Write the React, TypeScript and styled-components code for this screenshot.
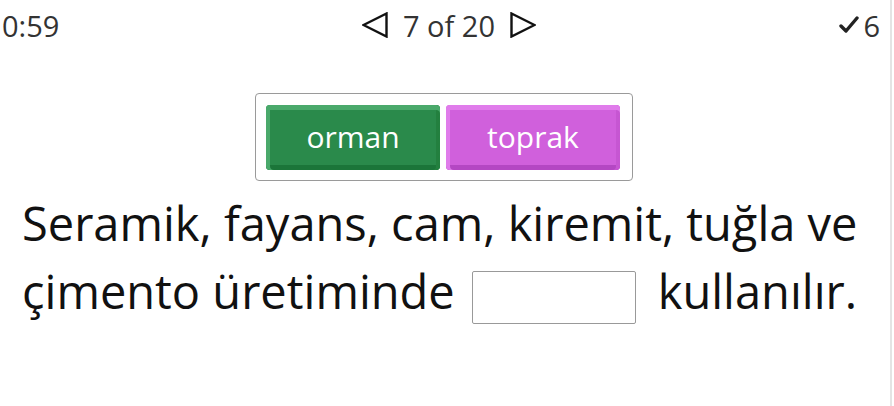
import React from "react";
import styled, { createGlobalStyle } from "styled-components";

const Global = createGlobalStyle`
  html, body { margin: 0; padding: 0; background: #fff; }
  body { font-family: "Open Sans", "Noto Sans", sans-serif; }
`;

const Page = styled.div`
  width: 890px;
  height: 406px;
  border-right: 2px solid #e4e4e4;
  box-sizing: content-box;
  display: flex;
  flex-direction: column;
  align-items: stretch;
  overflow: hidden;
`;

const Header = styled.div`
  height: 50px;
  display: flex;
  align-items: center;
  justify-content: space-between;
  padding: 0 10px 0 2px;
  color: #333;
  font-size: 29px;
  font-family: "Open Sans", sans-serif;
`;

const Slot = styled.div<{ $align: string; $gap: number; $indent?: number }>`
  flex: 1;
  display: flex;
  align-items: center;
  justify-content: ${(p) => p.$align};
  gap: ${(p) => p.$gap}px;
  padding-left: ${(p) => p.$indent ?? 0}px;
`;

const Tri = styled.svg`
  width: 26px;
  height: 26px;
  display: block;
`;

const ChoicesRow = styled.div`
  display: flex;
  justify-content: center;
  margin-top: 43px;
  padding-right: 2px;
`;

const Choices = styled.div`
  display: flex;
  gap: 6px;
  padding: 11px 12px 10px 10px;
  border: 1px solid #9a9a9a;
  border-radius: 4px;
`;

const Choice = styled.div<{ $base: string; $top: string; $bottom: string; $side: string }>`
  width: 174px;
  height: 65px;
  border-radius: 4px;
  background: ${(p) => p.$base};
  box-shadow: inset 0 5px 0 ${(p) => p.$top}, inset 4px 0 0 ${(p) => p.$top},
    inset -4px 0 0 ${(p) => p.$side}, inset 0 -5px 0 ${(p) => p.$bottom};
  color: #fff;
  font-size: 30px;
  font-weight: 500;
  display: flex;
  align-items: center;
  justify-content: center;
  padding-bottom: 3px;
  box-sizing: border-box;
`;

const Sentence = styled.div`
  margin-top: 8px;
  padding-left: 22px;
  font-family: "Open Sans", sans-serif;
  font-size: 47px;
  line-height: 68px;
  color: #111;
`;

const Blank = styled.span`
  display: inline-block;
  width: 164px;
  height: 53px;
  border: 1px solid #999;
  border-radius: 2px;
  box-sizing: border-box;
  vertical-align: middle;
  margin: 2px 22px 0 17px;
`;

export default function App() {
  return (
    <>
      <Global />
      <Page>
        <Header>
          <Slot $align="flex-start" $gap={0}>0:59</Slot>
          <Slot $align="center" $gap={15} $indent={16}>
            <Tri viewBox="0 0 26 26">
              <path d="M24.5 1.5 L1.5 13 L24.5 24.5 Z" fill="none" stroke="#111" strokeWidth="2.4" strokeLinejoin="miter" />
            </Tri>
            <span>7 of 20</span>
            <Tri viewBox="0 0 26 26">
              <path d="M1.5 1.5 L24.5 13 L1.5 24.5 Z" fill="none" stroke="#111" strokeWidth="2.4" strokeLinejoin="miter" />
            </Tri>
          </Slot>
          <Slot $align="flex-end" $gap={4}>
            <svg width="20" height="20" viewBox="0 0 20 20">
              <path d="M2 11 L7 16 L18 3" fill="none" stroke="#222" strokeWidth="3.4" strokeLinecap="round" strokeLinejoin="round" />
            </svg>
            <span>6</span>
          </Slot>
        </Header>
        <ChoicesRow>
          <Choices>
            <Choice $base="#2a8a4b" $top="#4aa96b" $side="#23803f" $bottom="#1b7539">orman</Choice>
            <Choice $base="#d060dc" $top="#e07ceb" $side="#c656d2" $bottom="#b447c3">toprak</Choice>
          </Choices>
        </ChoicesRow>
        <Sentence>
          Seramik, fayans, cam, kiremit, tuğla ve
          <br />
          çimento üretiminde
          <Blank />
          kullanılır.
        </Sentence>
      </Page>
    </>
  );
}
